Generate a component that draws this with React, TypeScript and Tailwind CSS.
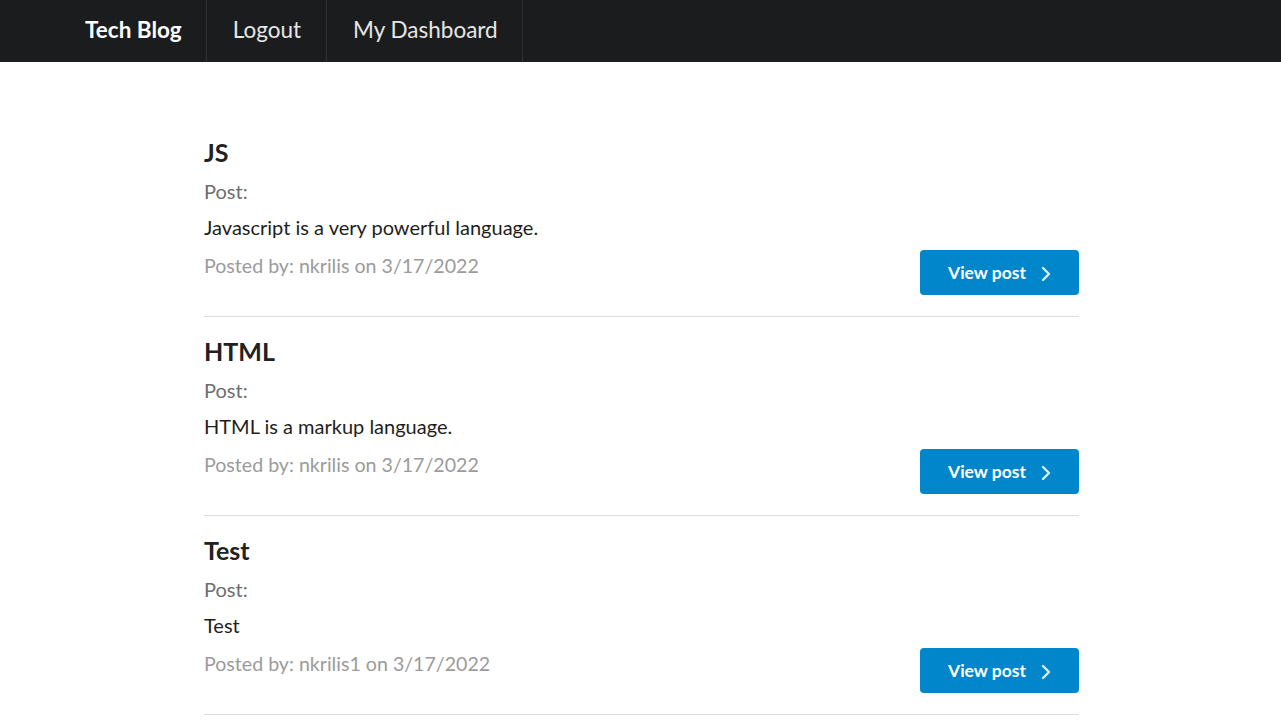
import React from "react";

const posts = [
  { title: "JS", body: "Javascript is a very powerful language.", user: "nkrilis", date: "3/17/2022" },
  { title: "HTML", body: "HTML is a markup language.", user: "nkrilis", date: "3/17/2022" },
  { title: "Test", body: "Test", user: "nkrilis1", date: "3/17/2022" },
];

export default function App() {
  return (
    <div className="min-h-screen bg-white" style={{ fontFamily: "Lato, 'Open Sans', sans-serif" }}>
      <nav className="h-[62px] bg-[#1b1c1d] flex pl-[60px]">
        <a className="flex items-center pb-[2px] pl-[25px] pr-[24px] border-r border-[#2f3031] text-[22.5px] font-bold text-white">Tech Blog</a>
        <a className="flex items-center pb-[2px] pl-[26px] pr-[25px] border-r border-[#2f3031] text-[22.5px] text-[#e6e6e6]">Logout</a>
        <a className="flex items-center pb-[2px] pl-[26px] pr-[24px] border-r border-[#2f3031] text-[22.5px] text-[#e6e6e6]">My Dashboard</a>
      </nav>
      <main className="w-[875px] ml-[204px] pt-[56px]">
        {posts.map((p) => (
          <div key={p.title} className="pt-[15px] pb-[21px] border-b border-[#dcdcdc]">
            <h2 className="pt-[1px] text-[25px] leading-[36px] font-bold text-[#212121]">{p.title}</h2>
            <div className="mt-[7px] text-[20px] leading-[28px] text-[#6e6e6e]">Post:</div>
            <div className="mt-[8px] text-[20px] leading-[28px] text-[#1e1e1e]">{p.body}</div>
            <div className="mt-[9px] flex items-start justify-between">
              <div className="pt-[2px] text-[19.6px] leading-[28px] text-[#9b9b9b]">Posted by: {p.user} on {p.date}</div>
              <button className="w-[159px] h-[45px] rounded-[4px] bg-[#0185cb] text-white text-[17.5px] font-bold flex items-center justify-center gap-[15px] pt-[2px]">
                <span>View post</span>
                <svg width="10" height="16" viewBox="0 0 10 16" fill="none" stroke="#dbeefa" strokeWidth="2.4" strokeLinecap="round" strokeLinejoin="round">
                  <polyline points="2,2 8,8 2,14" />
                </svg>
              </button>
            </div>
          </div>
        ))}
      </main>
    </div>
  );
}
